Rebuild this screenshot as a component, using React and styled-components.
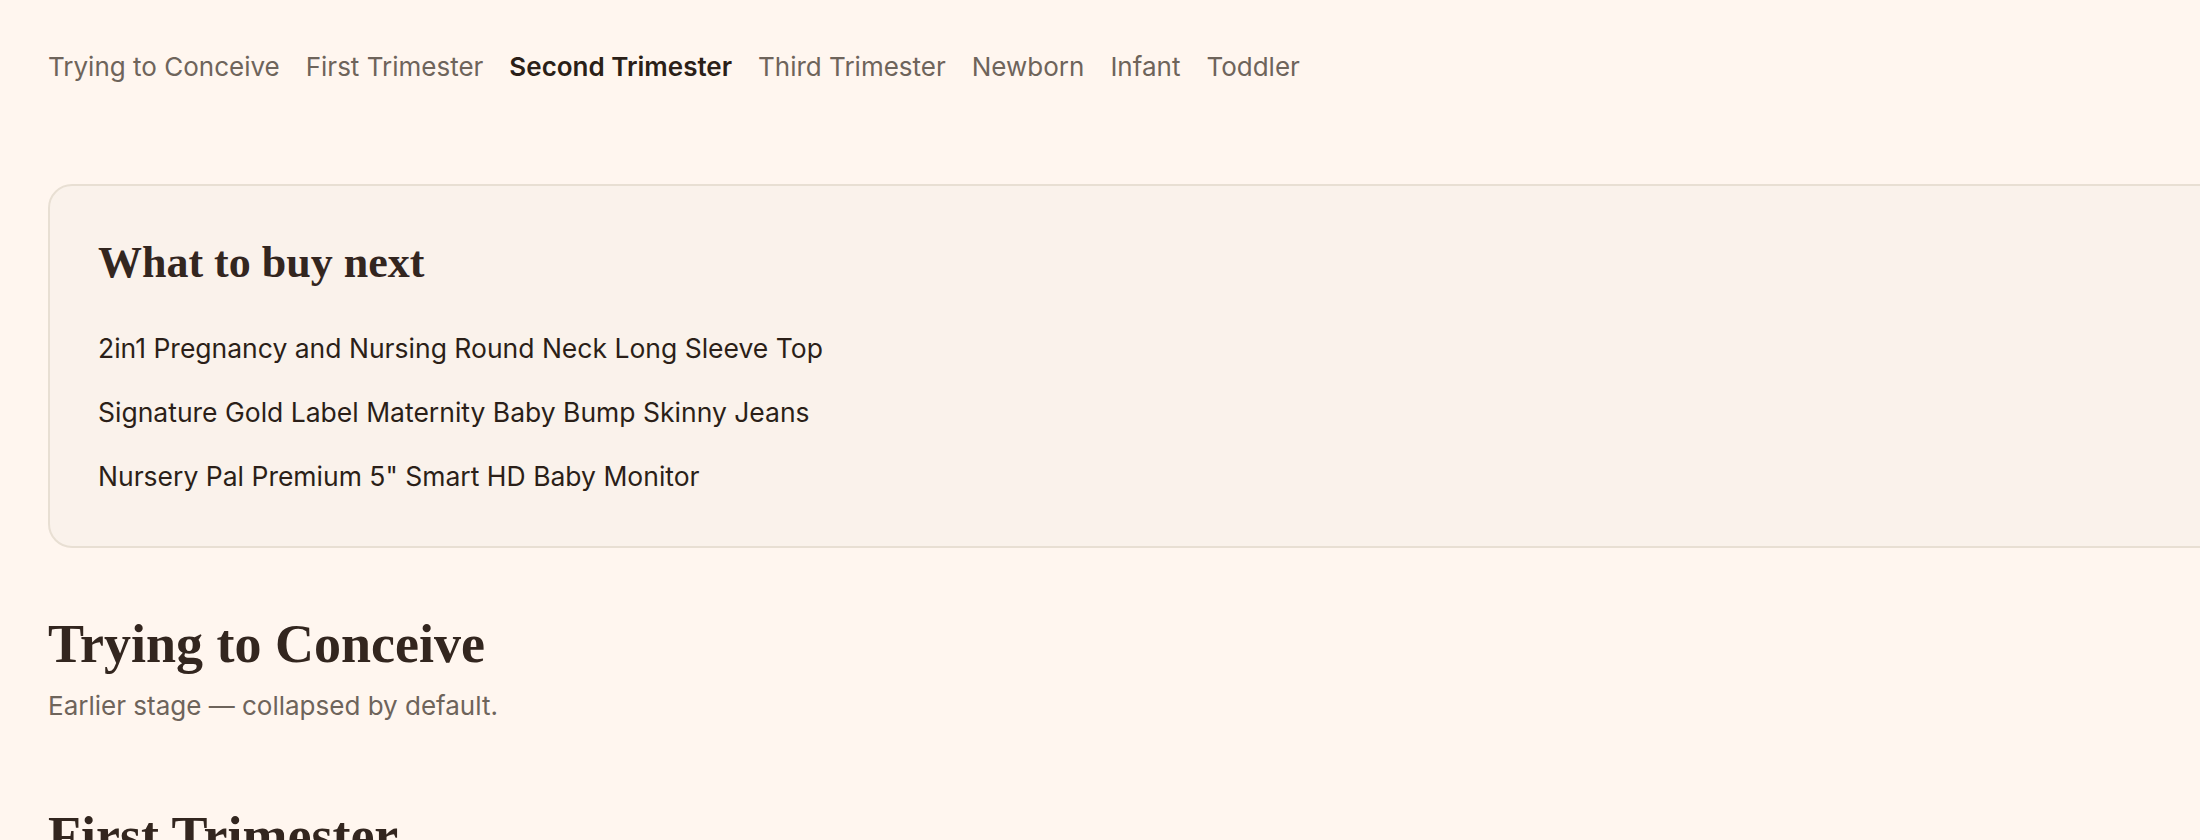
import React from "react";
import styled, { createGlobalStyle } from "styled-components";

const GlobalStyle = createGlobalStyle`
  html, body {
    margin: 0;
    padding: 0;
    background: #fff6ef;
    overflow: hidden;
  }
  body {
    font-family: Inter, "Noto Sans", sans-serif;
    color: #33261f;
  }
`;

const stages = [
  "Trying to Conceive",
  "First Trimester",
  "Second Trimester",
  "Third Trimester",
  "Newborn",
  "Infant",
  "Toddler",
];

const picks = [
  "2in1 Pregnancy and Nursing Round Neck Long Sleeve Top",
  "Signature Gold Label Maternity Baby Bump Skinny Jeans",
  'Nursery Pal Premium 5" Smart HD Baby Monitor',
];

const App = () => {
  return (
    <>
      <GlobalStyle />
      <Page>
        <StageNav>
          {stages.map((s) => (
            <StageLink key={s} active={s === "Second Trimester"}>
              {s}
            </StageLink>
          ))}
        </StageNav>

        <BuyCard>
          <CardTitle>What to buy next</CardTitle>
          <PickList>
            {picks.map((p) => (
              <Pick key={p}>{p}</Pick>
            ))}
          </PickList>
        </BuyCard>

        <Section>
          <SectionTitle>Trying to Conceive</SectionTitle>
          <SectionNote>Earlier stage — collapsed by default.</SectionNote>
        </Section>

        <Section>
          <SectionTitle>First Trimester</SectionTitle>
        </Section>
      </Page>
    </>
  );
};

const Page = styled.div`
  display: flex;
  flex-direction: column;
  padding: 51px 48px 0;
  height: 840px;
  box-sizing: border-box;
`;

const StageNav = styled.nav`
  display: flex;
  gap: 26px;
  height: 36px;
  align-items: center;
`;

const StageLink = styled.a`
  font-size: 26px;
  color: ${(p) => (p.active ? "#2b1f18" : "#6e645b")};
  font-weight: ${(p) => (p.active ? 600 : 400)};
  cursor: pointer;
`;

const BuyCard = styled.div`
  margin-top: 102px;
  width: 2300px;
  box-sizing: border-box;
  border: 2px solid #e8dfd3;
  border-radius: 24px;
  background: #faf2eb;
  padding: 53px 48px 53px;
`;

const CardTitle = styled.h2`
  margin: 0;
  font-family: "Liberation Serif", serif;
  font-weight: 700;
  font-size: 44px;
  line-height: 1.1;
  color: #33261f;
`;

const PickList = styled.div`
  display: flex;
  flex-direction: column;
  gap: 30px;
  margin-top: 44px;
`;

const Pick = styled.div`
  font-size: 26.5px;
  line-height: 34px;
  color: #2b1f18;
`;

const Section = styled.section`
  margin-top: 67px;
  & + & {
    margin-top: 86px;
  }
`;

const SectionTitle = styled.h2`
  margin: 0;
  font-family: "Liberation Serif", serif;
  font-weight: 700;
  font-size: 54px;
  line-height: 1.1;
  color: #33261f;
`;

const SectionNote = styled.p`
  margin: 15px 0 0;
  font-size: 26px;
  color: #6e645b;
`;

export default App;
